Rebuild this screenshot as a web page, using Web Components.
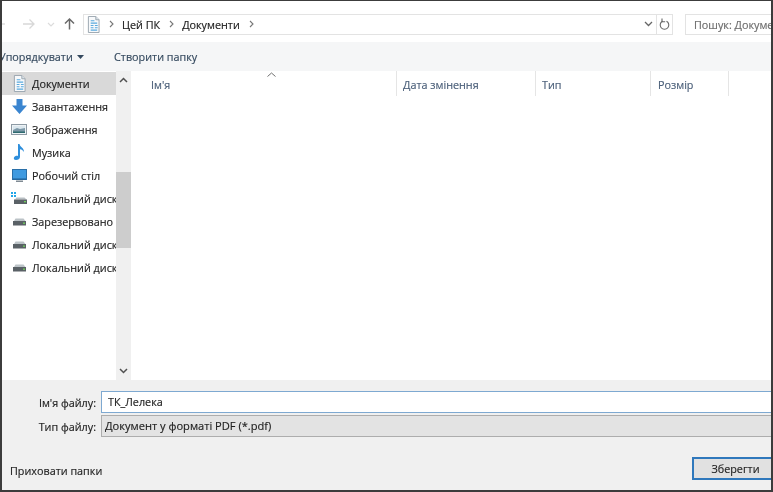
<!DOCTYPE html>
<html lang="uk">
<head>
<meta charset="utf-8">
<title>Зберегти як</title>
<style>
html, body { margin: 0; padding: 0; height: 100%; }
body { font-family: "Open Sans", "Noto Sans", sans-serif; font-size: 10.8px; color: #1e1e1e; background: #fff; overflow: hidden; -webkit-text-stroke: 0.15px; }
</style>
</head>
<body>

<save-dialog>
    <nav-bar></nav-bar>
    <tool-bar></tool-bar>
    <div style="display: flex; flex: 1; min-height: 0;">
        <side-bar>
            <nav-item icon="doc" selected>Документи</nav-item>
            <nav-item icon="down">Завантаження</nav-item>
            <nav-item icon="pic">Зображення</nav-item>
            <nav-item icon="music">Музика</nav-item>
            <nav-item icon="desk">Робочий стіл</nav-item>
            <nav-item icon="winDisk">Локальний диск (C:)</nav-item>
            <nav-item icon="disk">Зарезервовано системою</nav-item>
            <nav-item icon="disk">Локальний диск (D:)</nav-item>
            <nav-item icon="disk">Локальний диск (E:)</nav-item>
        </side-bar>
        <v-scroll></v-scroll>
        <file-list></file-list>
    </div>
    <save-panel></save-panel>
</save-dialog>

<script>
const icons = {
    doc: `<svg width="13" height="17" viewBox="1 0 14 18" preserveAspectRatio="none"><path d="M2.500 .5h8l3.500 3.500v13.500h-11.500z" fill="#f7f9fb" stroke="#98a4ae"/><path d="M10.500 .5v3.500h3.500" fill="#dfe6ec" stroke="#98a4ae"/><path d="M5 5h4M5 7.500h7M5 10h3M9.500 10h3M5 12.500h3M9.500 12.500h3M5 15h7" stroke="#5aa9de" stroke-width="1.200"/></svg>`,
    down: `<svg width="15" height="15" viewBox="0 0 15 15"><path d="M4.500 0h6v6.500h4.500l-7.500 8.500-7.500-8.500h4.500z" fill="#3a85d0"/></svg>`,
    pic: `<svg width="16" height="11" viewBox="0 0 16 11"><rect x=".5" y=".5" width="15" height="10" fill="#eef3f6" stroke="#8e9ba5"/><rect x="2" y="2" width="12" height="7" fill="#dbe7ee"/><path d="M2 6l4-2 3 1 5-1v5h-12z" fill="#7d98a8"/><path d="M2 7.500h12v1.500h-12z" fill="#2d6a6f"/></svg>`,
    music: `<svg width="12" height="17" viewBox="0 0 12 17"><path d="M5 0h1.500c.5 3 4.500 3.500 4.500 8-1-1.500-2.500-2.500-4-2.700v7.700c0 2-2 3-4 3s-2.500-1.500-2-2.500c.5-1.200 2.500-2 4-1.500z" fill="#2f8fdc"/></svg>`,
    desk: `<svg width="15" height="13" viewBox="0 0 15 13"><rect x=".5" y=".5" width="14" height="10" fill="#3f9ae0" stroke="#2a6fa8"/><path d="M1 9.500h13v1h-13z" fill="#1f5f94"/><path d="M4 11.500h7v1.500h-7z" fill="#7f8a93"/></svg>`,
    winDisk: `<svg width="16" height="13" viewBox="0 0 16 13"><path d="M0 0h2v2h-2zM3 0h2v2h-2zM0 3h2v2h-2zM3 3h2v2h-2z" fill="#22a6e8"/><path d="M4 7.500l1.500-2h8l2 2z" fill="#b9c0c4"/><rect x="3" y="7.500" width="13" height="4.500" fill="#5a6166"/><rect x="13" y="9" width="2" height="1.300" fill="#6fd05a"/></svg>`,
    disk: `<svg width="13" height="8" viewBox="0 0 13 8"><path d="M1 3l1.500-2.500h8l2 2.500z" fill="#bcc3c7"/><rect x="0" y="3" width="13" height="4.500" fill="#5a6166"/><rect x="10" y="4.500" width="2" height="1.300" fill="#6fd05a"/></svg>`
};

// window frame, stacks the slotted sections
class SaveDialog extends HTMLElement {
    constructor() {
        super();
        this.attachShadow({ mode: "open" }).innerHTML = `
<style>
:host { display: flex; flex-direction: column; box-sizing: border-box; width: 773px; height: 492px; overflow: hidden;
    border-style: solid; border-color: #3c3c3c; border-width: 1px 2px 2px 2px; background: #fff; filter: blur(0.3px); }
</style>
<slot></slot>`;
    }
}

class NavBar extends HTMLElement {
    constructor() {
        super();
        this.attachShadow({ mode: "open" }).innerHTML = `
<style>
:host { display: flex; align-items: center; height: 41px; flex: none; padding-top: 5px; box-sizing: border-box; }
.arrows { display: flex; align-items: center; width: 81px; flex: none; }
.address { display: flex; align-items: center; width: 574px; height: 21px; border: 1px solid #e3e3e3; box-sizing: border-box; color: #1c1c1c; padding-left: 3px; flex: none; }
.sep { margin: 0 8px 0 9px; flex: none; }
.chev { margin-left: auto; margin-right: 3px; }
.refresh { display: flex; align-items: center; justify-content: center; width: 16px; height: 21px; border: 1px solid #e3e3e3; border-left: none; box-sizing: border-box; flex: none; }
.search { margin-left: 12px; flex: 1; height: 21px; border: 1px solid #e3e3e3; border-right: none; box-sizing: border-box; color: #6d6d6d; padding-left: 8px; line-height: 19px; white-space: nowrap; overflow: hidden; }
</style>
<div class="arrows">
    <svg width="81" height="16" viewBox="0 0 81 16" fill="none">
        <path d="M0 8h3" stroke="#d8d8d8" stroke-width="1.300"/>
        <path d="M21 8h11M27.500 3.500l4.500 4.500-4.500 4.500" stroke="#d8d8d8" stroke-width="1.300"/>
        <path d="M46 7l3 3 3-3" stroke="#dcdcdc" stroke-width="1.200"/>
        <path d="M67.500 13.500v-10.500M63 7.500l4.500-4.500 4.500 4.500" stroke="#6a6a6a" stroke-width="1.500"/>
    </svg>
</div>
<div class="address">
    ${icons.doc}
    <svg class="sep" width="5" height="8" viewBox="0 0 5 8" fill="none"><path d="M1 1l3 3-3 3" stroke="#777" stroke-width="1.100"/></svg>
    <span>Цей ПК</span>
    <svg class="sep" width="5" height="8" viewBox="0 0 5 8" fill="none"><path d="M1 1l3 3-3 3" stroke="#777" stroke-width="1.100"/></svg>
    <span>Документи</span>
    <svg class="sep" width="5" height="8" viewBox="0 0 5 8" fill="none"><path d="M1 1l3 3-3 3" stroke="#777" stroke-width="1.100"/></svg>
    <svg class="chev" width="9" height="6" viewBox="0 0 9 6" fill="none"><path d="M1 1l3.500 3.500 3.500-3.500" stroke="#666" stroke-width="1.300"/></svg>
</div>
<div class="refresh">
    <svg width="11" height="13" viewBox="0 0 11 13" fill="none"><path d="M3.500 3.200a4.300 4.300 0 1 0 4 0" stroke="#666" stroke-width="1.100"/><path d="M3 .5v3.200h3.200" stroke="#666" stroke-width="1.100"/></svg>
</div>
<div class="search">Пошук: Документи</div>`;
    }
}

class ToolBar extends HTMLElement {
    constructor() {
        super();
        this.attachShadow({ mode: "open" }).innerHTML = `
<style>
:host { display: flex; align-items: center; height: 29px; flex: none; background: #f5f6f7; color: #34495e; white-space: nowrap; overflow: hidden; }
.sort { margin-left: -3px; width: 78px; flex: none; }
svg { flex: none; }
.create { margin-left: 30px; }
</style>
<span class="sort">Упорядкувати</span>
<svg width="7" height="4" viewBox="0 0 7 4"><path d="M0 0h7l-3.500 4z" fill="#34495e"/></svg>
<span class="create">Створити папку</span>`;
    }
}

class SideBar extends HTMLElement {
    constructor() {
        super();
        this.attachShadow({ mode: "open" }).innerHTML = `
<style>
:host { display: flex; flex-direction: column; width: 114px; flex: none; padding-top: 1px; overflow: hidden; background: #fff; }
</style>
<slot></slot>`;
    }
}

class NavItem extends HTMLElement {
    constructor() {
        super();
        const icon = icons[this.getAttribute("icon")] || "";
        this.attachShadow({ mode: "open" }).innerHTML = `
<style>
:host { display: flex; align-items: center; height: 23px; flex: none; white-space: nowrap; overflow: hidden; color: #1e1e1e; }
:host([selected]) { background: #d9d9d9; }
.icon { display: flex; justify-content: center; align-items: center; width: 30px; padding-left: 4px; box-sizing: border-box; flex: none; height: 100%; }
</style>
<span class="icon">${icon}</span><slot></slot>`;
    }
}

class VScroll extends HTMLElement {
    constructor() {
        super();
        this.attachShadow({ mode: "open" }).innerHTML = `
<style>
:host { display: flex; flex-direction: column; align-items: stretch; width: 15px; flex: none; background: #f0f0f0; }
.btn { display: flex; align-items: center; justify-content: center; height: 18px; flex: none; }
.thumb { height: 76px; background: #cdcdcd; margin-top: 83px; flex: none; }
.rest { flex: 1; }
</style>
<div class="btn"><svg width="9" height="6" viewBox="0 0 9 6" fill="none"><path d="M1 5l3.500-3.500 3.500 3.500" stroke="#505050" stroke-width="1.500"/></svg></div>
<div class="thumb"></div>
<div class="rest"></div>
<div class="btn"><svg width="9" height="6" viewBox="0 0 9 6" fill="none"><path d="M1 1l3.500 3.500 3.500-3.500" stroke="#505050" stroke-width="1.500"/></svg></div>`;
    }
}

class FileList extends HTMLElement {
    constructor() {
        super();
        this.attachShadow({ mode: "open" }).innerHTML = `
<style>
:host { display: block; flex: 1; background: #fff; position: relative; }
.head { display: grid; grid-template-columns: 266px 139px 115px 78px; height: 25px; color: #4c607a; }
.head div { display: flex; align-items: center; padding-left: 6px; border-right: 1px solid #e5e5e5; box-sizing: border-box; padding-top: 2px; }
.head div:first-child { padding-left: 20px; }
.head div:last-child { padding-left: 7px; }
.sort { position: absolute; left: 136px; top: 1px; }
</style>
<div class="head">
    <div>Ім'я</div>
    <div>Дата змінення</div>
    <div>Тип</div>
    <div>Розмір</div>
</div>
<svg class="sort" width="9" height="5" viewBox="0 0 9 5" fill="none"><path d="M.5 4.500l4-3.500 4 3.500" stroke="#6f6f6f"/></svg>`;
    }
}

class SavePanel extends HTMLElement {
    constructor() {
        super();
        this.attachShadow({ mode: "open" }).innerHTML = `
<style>
:host { display: flex; flex-direction: column; height: 110px; flex: none; background: #f0f0f0; color: #1e1e1e; box-sizing: border-box; padding-top: 11px; }
.row { display: flex; align-items: center; }
label { width: 94px; text-align: right; flex: none; }
.name { margin-left: 5px; flex: 1; height: 22px; background: #fff; border: 1px solid #7ea9d1; border-right: none; box-sizing: border-box; padding-left: 6px; line-height: 20px; }
.type { margin-left: 5px; flex: 1; height: 22px; background: #e3e3e3; border: 1px solid #adadad; border-right: none; box-sizing: border-box; padding-left: 3px; line-height: 20px; font-size: 11.1px; }
.footer { display: flex; align-items: center; justify-content: space-between; margin-top: 20px; }
.hide { margin-left: 8px; position: relative; top: 2px; }
button { width: 79px; height: 23px; border: 2px solid #2f78bc; border-right-width: 0; background: #e1e1e1; font: inherit; color: #1e1e1e; padding: 0 0 0 6px; }
</style>
<div class="row"><label>Ім'я файлу:</label><div class="name">ТК_Лелека</div></div>
<div class="row" style="margin-top:2px"><label>Тип файлу:</label><div class="type">Документ у форматі PDF (*.pdf)</div></div>
<div class="footer"><span class="hide">Приховати папки</span><button>Зберегти</button></div>`;
    }
}

customElements.define("save-dialog", SaveDialog);
customElements.define("nav-bar", NavBar);
customElements.define("tool-bar", ToolBar);
customElements.define("side-bar", SideBar);
customElements.define("nav-item", NavItem);
customElements.define("v-scroll", VScroll);
customElements.define("file-list", FileList);
customElements.define("save-panel", SavePanel);
</script>
</body>
</html>
